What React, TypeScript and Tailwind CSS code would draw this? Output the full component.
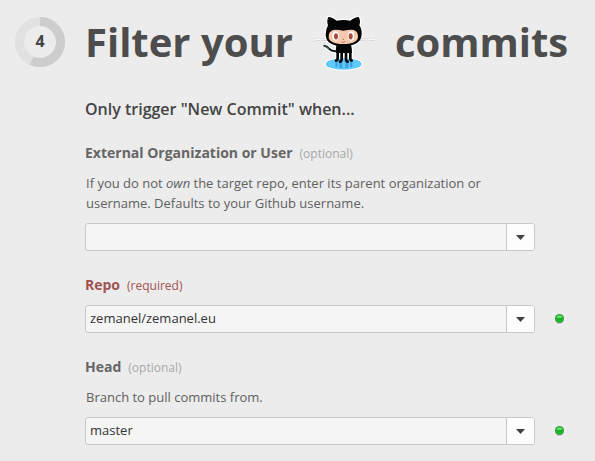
import { useState } from "react";

function StepRing({ step }: { step: number }) {
  return (
    <div className="relative mt-[17px] size-[50px] shrink-0">
      <svg viewBox="0 0 50 50" className="size-full" aria-hidden="true">
        <circle cx="25" cy="25" r="20.5" fill="none" stroke="#e1e1e1" strokeWidth="9" />
        <path d="M25 4.5A20.5 20.5 0 1 1 16.7 43.75" fill="none" stroke="#cdcdcd" strokeWidth="9" />
      </svg>
      <span className="absolute inset-0 flex items-center justify-center pb-0.5 text-[16px] font-bold text-[#444]">
        {step}
      </span>
    </div>
  );
}

function Octocat() {
  const head =
    "M84 34Q93 33 109 45Q130 41 150 45Q166 33 175 34Q182 46 177 59Q185 70 184 86Q183 121 130 121Q77 121 76 87Q76 70 83 59Q78 46 84 34Z";
  const body = "M108 118H152Q155 128 155 142H107Q106 128 108 118Z";
  return (
    <svg viewBox="32 22 198 174" className="h-[58px] w-[66px] shrink-0" role="img" aria-label="GitHub">
      <g fill="#fff" stroke="#fff" strokeWidth="7" strokeLinejoin="round">
        <path d={head} />
        <path d={body} />
        <path d="M72 120Q80 121 87 130Q95 138 108 137" fill="none" strokeWidth="13" />
        <path d="M33 97Q60 94 84 101M36 107Q62 100 86 105M224 96Q200 94 177 101M224 105Q200 100 176 105" fill="none" strokeWidth="6" />
        <ellipse cx="130" cy="175" rx="54" ry="17" />
        <path d="M107 138H155V170H107Z" />
      </g>
      <path d="M33 97Q60 95 84 101M36 107Q62 101 86 105M224 96Q200 95 177 101M224 105Q200 101 176 105" fill="none" stroke="#bdbdbd" strokeWidth="2" />
      <ellipse cx="130" cy="175" rx="54" ry="17" fill="#60cbfa" />
      <path d="M105 170h7v14h-7zM117 170h9v18h-9zM135 170h9v18h-9zM149 170h7v14h-7z" fill="#3f9fe6" />
      <path d={head} fill="#050505" />
      <path d={body} fill="#050505" />
      <path d="M72 120Q80 121 87 130Q95 138 110 136" fill="none" stroke="#101616" strokeWidth="6" strokeLinecap="round" />
      <path d="M72 120Q80 122 86 130" fill="none" stroke="#3d6d68" strokeWidth="3" />
      <g fill="none" stroke="#050505" strokeWidth="8" strokeLinecap="round">
        <path d="M112 138V156Q112 164 107 165" />
        <path d="M124 138V160Q124 167 119 168" />
        <path d="M137 138V160Q137 167 142 168" />
        <path d="M150 138V156Q150 164 154 165" />
      </g>
      <path d="M99 73Q109 71 129 75Q149 71 160 73Q173 77 173 93Q173 114 129 115Q85 114 85 93Q85 77 99 73Z" fill="#f6c9ad" />
      <ellipse cx="106" cy="91" rx="10" ry="14" fill="#fff" />
      <ellipse cx="152" cy="91" rx="10" ry="14" fill="#fff" />
      <ellipse cx="107" cy="92" rx="6" ry="9.5" fill="#a94e43" />
      <ellipse cx="151" cy="92" rx="6" ry="9.5" fill="#a94e43" />
      <circle cx="129" cy="101" r="2" fill="#a94e43" />
      <path d="M123 108Q129 112 135 108" fill="none" stroke="#a94e43" strokeWidth="2" />
    </svg>
  );
}

function StatusLight() {
  return (
    <svg viewBox="0 0 9 10" className="h-2.5 w-[9px]" role="img" aria-label="Valid">
      <ellipse cx="4.5" cy="5.4" rx="4.5" ry="4.5" fill="#c9bfcb" />
      <circle cx="4.5" cy="4.5" r="4.5" fill="#3c9a40" />
      <circle cx="4.5" cy="4.5" r="3.7" fill="#18bd2c" />
      <ellipse cx="4.5" cy="2.8" rx="2.7" ry="1.5" fill="#6ad570" />
      <path d="M2 4.8Q4.5 5.6 7 4.5" fill="none" stroke="#159a26" strokeWidth="0.8" />
    </svg>
  );
}

type FieldProps = {
  id: string;
  label: string;
  required?: boolean;
  help?: React.ReactNode;
  initial?: string;
};

function Field({ id, label, required = false, help, initial = "" }: FieldProps) {
  const [value, setValue] = useState(initial);
  return (
    <div className="flex flex-col gap-2.5">
      <label
        htmlFor={id}
        className={`flex h-5 items-baseline gap-[7px] leading-5 ${required ? "text-[#a05252]" : "text-[#666]"}`}
      >
        <span className="text-[14px] font-bold">{label}</span>
        <span className={`text-[12px] ${required ? "text-[#a05252]" : "text-[#a8a8a8]"}`}>
          {required ? "(required)" : "(optional)"}
        </span>
      </label>
      {help && <p className="max-w-[450px] pl-px text-[13px] leading-5 text-[#606060]">{help}</p>}
      <div className="flex items-center gap-5">
        <div className="flex h-7 min-w-0 flex-1 overflow-hidden rounded-[3px] border border-[#c8c8c8] bg-[#f5f5f5]">
          <input
            id={id}
            type="text"
            value={value}
            onChange={(event) => setValue(event.target.value)}
            className="min-w-0 flex-1 bg-transparent px-1 text-[13px] text-[#333] outline-none"
          />
          <button
            type="button"
            aria-label={`Show choices for ${label}`}
            className="flex w-7 items-center justify-center border-l border-[#c8c8c8] bg-[#fdfdfd]"
          >
            <svg viewBox="0 0 9 5" className="h-[5px] w-[9px]" aria-hidden="true">
              <path d="M0 0h9L4.5 5z" fill="#404040" />
            </svg>
          </button>
        </div>
        <div className="w-[9px] shrink-0">{value && <StatusLight />}</div>
      </div>
    </div>
  );
}

export default function App() {
  return (
    <main className="flex min-h-screen gap-5 bg-[#ececec] pr-[31px] pl-[15px] font-['Open_Sans','Noto_Sans',sans-serif]">
      <StepRing step={4} />
      <form className="min-w-0 flex-1 pb-4" onSubmit={(event) => event.preventDefault()}>
        <h1 className="flex h-[84px] items-center gap-[18px] text-[40px] font-bold whitespace-nowrap text-[#4d4d4d]">
          <span>Filter your</span>
          <Octocat />
          <span>commits</span>
        </h1>
        <h2 className="mt-[13px] text-[16px] leading-6 font-semibold text-[#444]">
          Only trigger "New Commit" when...
        </h2>
        <div className="mt-[22px] flex flex-col gap-6">
          <Field
            id="organization"
            label="External Organization or User"
            help={
              <>
                If you do not <em>own</em> the target repo, enter its parent organization or username.
                Defaults to your Github username.
              </>
            }
          />
          <Field id="repo" label="Repo" required initial="zemanel/zemanel.eu" />
          <Field id="head" label="Head" help="Branch to pull commits from." initial="master" />
        </div>
      </form>
    </main>
  );
}
